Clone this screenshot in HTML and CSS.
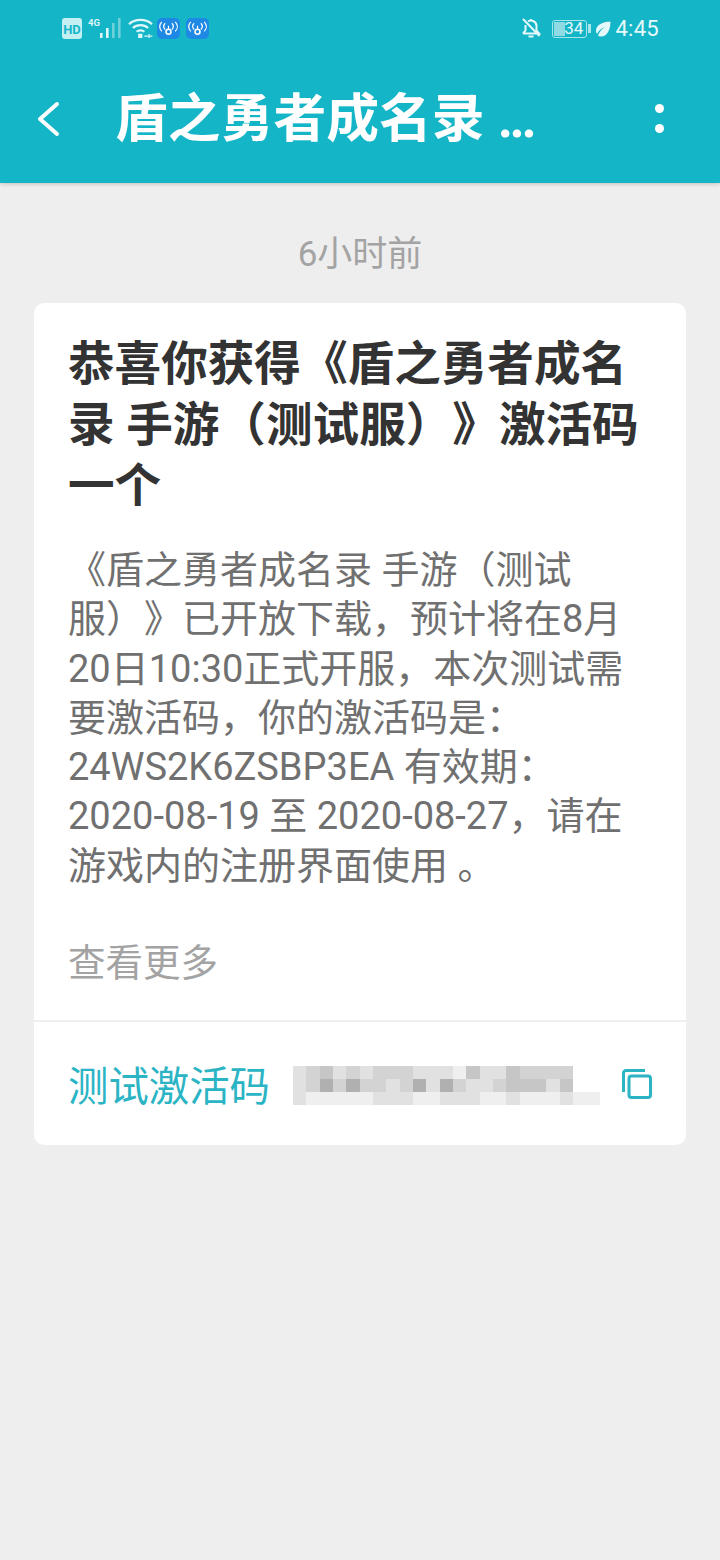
FILE: index.html
```html
<!DOCTYPE html>
<html lang="zh">
<head>
<meta charset="utf-8">
<title>盾之勇者成名录</title>
<link rel="stylesheet" href="styles.css">
</head>
<body>
<header class="top">
  <div class="status">
    <div class="status-left">
      <svg class="ic-hd" viewBox="0 0 20 21"><rect x="0" y="0" width="20" height="21" rx="3" fill="#c4f0f4"/><text x="10" y="15.5" text-anchor="middle" class="hd-text">HD</text></svg>
      <svg class="ic-signal" viewBox="0 0 33 20"><text x="0" y="8" class="sig-text">4G</text><rect x="12" y="15" width="2.6" height="5" fill="#dff7f9"/><rect x="18" y="10" width="2.6" height="10" fill="#dff7f9"/><rect x="24" y="5" width="2.6" height="15" fill="#6fd0da"/><rect x="30" y="0" width="2.6" height="20" fill="#6fd0da"/></svg>
      <svg class="ic-wifi" viewBox="0 0 26 21"><path d="M1 6.5C7 .5 19 .5 25 6.5M5 10.5C9 6.5 17 6.5 21 10.5M9 14.5C11 12.5 15 12.5 17 14.5" fill="none" stroke="#dff7f9" stroke-width="2.4"/><rect x="10.500" y="16.500" width="4.500" height="4.500" fill="#dff7f9"/><path d="M17 19h4M22 17v4M25.500 19h-2.500" stroke="#dff7f9" stroke-width="1.5"/></svg>
      <svg class="ic-app" viewBox="0 0 24 22"><rect width="24" height="22" rx="5" fill="#1e88e5"/><circle cx="12" cy="14.500" r="2.600" fill="none" stroke="#fff" stroke-width="1.600"/><path d="M12 8v4M8.500 5.500c-2 2-2 4.500 0 6.500M15.500 5.500c2 2 2 4.500 0 6.500M5 4c-3 3-3 7 0 10M19 4c3 3 3 7 0 10" fill="none" stroke="#fff" stroke-width="1.300"/></svg>
      <svg class="ic-app" viewBox="0 0 24 22"><rect width="24" height="22" rx="5" fill="#1e88e5"/><circle cx="12" cy="14.500" r="2.600" fill="none" stroke="#fff" stroke-width="1.600"/><path d="M12 8v4M8.500 5.500c-2 2-2 4.500 0 6.500M15.500 5.500c2 2 2 4.500 0 6.500M5 4c-3 3-3 7 0 10M19 4c3 3 3 7 0 10" fill="none" stroke="#fff" stroke-width="1.300"/></svg>
    </div>
    <div class="status-right">
      <svg class="ic-bell" viewBox="0 0 20 20"><path d="M2 15.500h16l-2.500-3V8a5.500 5.500 0 0 0-8.500-4.500M4.500 7v5.500L2 15.500M7.500 18.500h5M10 1v1.500M2 1l16.500 17" fill="none" stroke="#e6f9fa" stroke-width="2"/></svg>
      <div class="battery"><div class="battery-fill"></div><span class="battery-num">34</span></div>
      <div class="battery-cap"></div>
      <svg class="ic-leaf" viewBox="0 0 16 16"><path d="M15.500 .500C7 1 1 4 1 10c0 1 .3 2 1 3 2-4 5-6 8-7-3 2-5 4-7 8.500 1 .8 2 1 3 1 6 0 9.500-6 9.500-15.500z" fill="#e6f9fa"/></svg>
      <span class="clock">4:45</span>
    </div>
  </div>
  <div class="nav">
    <svg class="ic-back" viewBox="0 0 24 36"><path d="M21 3L4 18l17 15" fill="none" stroke="#fff" stroke-width="4" stroke-linecap="round" stroke-linejoin="round"/></svg>
    <h1 class="nav-title">盾之勇者成名录 <span class="ellipsis">...</span></h1>
    <div class="more"><i></i><i></i></div>
  </div>
</header>
<main class="content">
  <div class="time">6小时前</div>
  <section class="card">
    <div class="card-body">
      <h2 class="card-title">恭喜你获得《盾之勇者成名<br>录 手游（测试服）》激活码<br>一个</h2>
      <p class="card-text">《盾之勇者成名录 手游（测试<br>服）》已开放下载，预计将在8月<br>20日10:30正式开服，本次测试需<br>要激活码，你的激活码是：<br>24WS2K6ZSBP3EA 有效期：<br>2020-08-19 至 2020-08-27，请在<br>游戏内的注册界面使用 。</p>
      <div class="see-more">查看更多</div>
    </div>
    <div class="code-row">
      <span class="code-label">测试激活码</span>
      <div class="mosaic">
        <i class="c2"></i><i class="c3"></i><i class="c4"></i><i class="c2"></i><i class="c3"></i><i class="c2"></i><i class="c3"></i><i class="c3"></i><i class="c3"></i><i class="c2"></i><i class="c2"></i><i class="c2"></i><i class="c1"></i><i class="c4"></i><i class="c2"></i><i class="c2"></i><i class="c4"></i><i class="c3"></i><i class="c3"></i><i class="c3"></i><i class="c3"></i><i class="c0"></i><i class="c0"></i>
        <i class="c2"></i><i class="c3"></i><i class="c5"></i><i class="c3"></i><i class="c5"></i><i class="c3"></i><i class="c3"></i><i class="c2"></i><i class="c3"></i><i class="c5"></i><i class="c2"></i><i class="c5"></i><i class="c3"></i><i class="c2"></i><i class="c2"></i><i class="c3"></i><i class="c4"></i><i class="c4"></i><i class="c4"></i><i class="c2"></i><i class="c4"></i><i class="c0"></i><i class="c0"></i>
        <i class="c2"></i><i class="c1"></i><i class="c1"></i><i class="c1"></i><i class="c1"></i><i class="c1"></i><i class="c2"></i><i class="c2"></i><i class="c2"></i><i class="c1"></i><i class="c1"></i><i class="c2"></i><i class="c2"></i><i class="c2"></i><i class="c1"></i><i class="c1"></i><i class="c2"></i><i class="c1"></i><i class="c1"></i><i class="c1"></i><i class="c2"></i><i class="c1"></i><i class="c1"></i>
      </div>
      <svg class="ic-copy" viewBox="0 0 30 30"><path d="M1.500 23V4a2.500 2.500 0 0 1 2.500-2.500h19" fill="none" stroke="#2bb4c4" stroke-width="3"/><rect x="7" y="7" width="21.500" height="21.500" rx="2.500" fill="none" stroke="#2bb4c4" stroke-width="3"/></svg>
    </div>
  </section>
</main>
</body>
</html>
```

FILE: styles.css
```css
* { box-sizing: border-box; }
html, body { margin: 0; padding: 0; }
body {
  width: 720px;
  height: 1560px;
  background: #eeeeee;
  font-family: Roboto, "Noto Sans CJK SC", sans-serif;
  overflow: hidden;
  text-spacing-trim: space-all;
}
.top {
  height: 183px;
  background: #14b5c7;
  box-shadow: 0 1px 4px rgba(0, 0, 0, 0.2);
  display: flex;
  flex-direction: column;
}
.status {
  height: 56px;
  padding: 16px 61px 0 62px;
  display: flex;
  justify-content: space-between;
  align-items: flex-start;
}
.status-left, .status-right { display: flex; align-items: center; height: 25px; }
.ic-hd { width: 20px; height: 21px; margin-right: 6px; }
.hd-text { font: bold 13px Roboto, sans-serif; fill: #14b5c7; }
.ic-signal { width: 33px; height: 20px; margin-right: 7px; margin-top: -1px; }
.sig-text { font: bold 9.5px Roboto, sans-serif; fill: #dff7f9; }
.ic-wifi { width: 25px; height: 20px; margin-right: 4px; margin-top: -1px; }
.ic-app { width: 23px; height: 21px; margin-right: 6px; }
.ic-bell { width: 20px; height: 20px; margin-right: 11px; margin-top: -2px; }
.battery {
  position: relative;
  width: 35px;
  height: 18px;
  border: 1.5px solid #a8e6ec;
  border-radius: 3px;
  display: flex;
  align-items: center;
  justify-content: center;
  padding-left: 8px;
}
.battery-fill {
  position: absolute;
  left: 1px; top: 1px; bottom: 1px;
  width: 11px;
  background: #8fdae3;
}
.battery-num { position: relative; font-size: 17px; line-height: 1; color: #e6f9fa; }
.battery-cap { width: 3px; height: 9px; background: #a8e6ec; margin: 0 4px 0 1px; }
.ic-leaf { width: 16px; height: 16px; margin-right: 4px; }
.clock { font-size: 22px; color: #e6f9fa; letter-spacing: 0.3px; }
.nav {
  flex: 1;
  display: flex;
  align-items: center;
  padding: 0 0 0 36px;
  position: relative;
}
.ic-back { width: 24px; height: 36px; margin-right: 55px; flex: none; margin-top: -1px; }
.nav-title {
  margin: 0;
  font-size: 52.8px;
  font-weight: 700;
  line-height: 70px;
  color: #ffffff;
  white-space: nowrap;
  margin-top: -1px;
}
.ellipsis { letter-spacing: -3.4px; }
.more {
  position: absolute;
  right: 56px;
  top: 48px;
  display: flex;
  flex-direction: column;
  gap: 11px;
}
.more i { display: block; width: 9px; height: 9px; border-radius: 50%; background: #fff; }
.content { padding: 0 34px; }
.time {
  height: 120px;
  padding-top: 47px;
  text-align: center;
  font-size: 35px;
  line-height: 50px;
  color: #a3a3a3;
}
.card {
  background: #ffffff;
  border-radius: 10px;
  height: 842px;
  display: flex;
  flex-direction: column;
}
.card-body { padding: 31px 35px 0 34px; height: 717px; }
.card-title {
  margin: 0;
  font-size: 46.6px;
  font-weight: 700;
  line-height: 61px;
  color: #333333;
  white-space: nowrap;
}
.card-text {
  margin: 29px 0 0;
  font-size: 38px;
  line-height: 49.3px;
  color: #707070;
  white-space: nowrap;
}
.see-more {
  margin-top: 47px;
  font-size: 37.5px;
  line-height: 50px;
  color: #a3a3a3;
}
.code-row {
  flex: 1;
  border-top: 2px solid #eeeeee;
  display: flex;
  align-items: center;
  padding: 0 33px 0 34px;
}
.code-label { font-size: 40.4px; color: #2bb4c4; width: 225px; flex: none; }
.mosaic {
  display: grid;
  grid-template-columns: repeat(23, 13.33px);
  grid-auto-rows: 13.33px;
  flex: none;
  width: 306px;
  margin-right: 23px;
  margin-top: 4px;
  filter: blur(0.5px);
}
.mosaic i { display: block; }
.c0 { background: #ffffff; }
.c1 { background: #efefef; }
.c2 { background: #e1e1e1; }
.c3 { background: #d3d3d3; }
.c4 { background: #c6c6c6; }
.c5 { background: #b0b0b0; }
.ic-copy { width: 30px; height: 30px; flex: none; }
```
